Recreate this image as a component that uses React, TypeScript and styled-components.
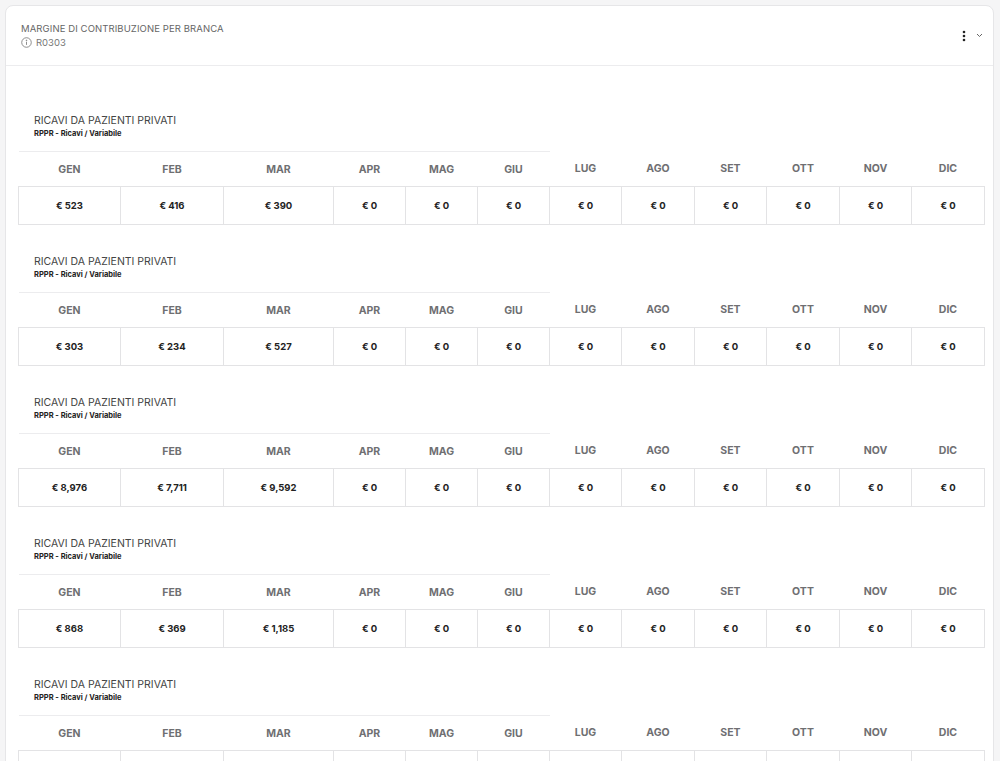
import styled, { createGlobalStyle } from "styled-components";

const Global = createGlobalStyle`
  body {
    margin: 0;
    background: #f5f5f6;
    font-family: Inter, "Liberation Sans", sans-serif;
  }
`;

const Page = styled.div`
  padding: 5px 6px 0 5px;
  height: 761px;
  box-sizing: border-box;
  overflow: hidden;
`;

const Card = styled.div`
  background: #fff;
  border: 1px solid #e6e6e8;
  border-radius: 8px;
  min-height: 800px;
`;

const CardHeader = styled.div`
  display: flex;
  justify-content: space-between;
  align-items: center;
  height: 59px;
  padding: 0 10px 0 15px;
  border-bottom: 1px solid #ececee;
`;

const Title = styled.div`
  font-size: 9.5px;
  color: #666;
  letter-spacing: 0.1px;
`;

const Code = styled.div`
  display: flex;
  align-items: center;
  gap: 4px;
  margin-top: 3px;
  font-size: 9.5px;
  color: #777;
`;

const Actions = styled.div`
  display: flex;
  align-items: center;
  gap: 10px;
  color: #333;
`;

const Body = styled.div`
  padding: 48px 10px 0 12px;
  display: flex;
  flex-direction: column;
  gap: 30px;
`;

const Section = styled.div``;

const SectionTitle = styled.div`
  padding-left: 16px;
  font-size: 10.5px;
  color: #444;
`;

const SectionSub = styled.div`
  padding-left: 16px;
  margin-top: 2px;
  font-size: 7.5px;
  font-weight: 700;
  color: #222;
  margin-bottom: 13px;
`;

const Table = styled.table`
  width: 966px;
  border-collapse: collapse;
  table-layout: fixed;
`;

const Th = styled.th<{ $top: boolean }>`
  height: 34px;
  padding: 0;
  font-size: 10.5px;
  font-weight: 700;
  color: #6f6f72;
  border-top: ${(p) => (p.$top ? "1px solid #ececee" : "none")};
`;

const Td = styled.td`
  height: 37px;
  padding: 0;
  text-align: center;
  font-size: 9.5px;
  font-weight: 700;
  color: #222;
  border: 1px solid #e3e3e5;
`;

const months = ["GEN", "FEB", "MAR", "APR", "MAG", "GIU", "LUG", "AGO", "SET", "OTT", "NOV", "DIC"];
const widths = [102, 103, 110, 72, 72, 72, 72, 73, 72, 73, 72, 73];
const rows = [
  ["523", "416", "390"],
  ["303", "234", "527"],
  ["8,976", "7,711", "9,592"],
  ["868", "369", "1,185"],
  ["", "", ""],
];

export default function App() {
  return (
    <Page>
      <Global />
      <Card>
        <CardHeader>
          <div>
            <Title>MARGINE DI CONTRIBUZIONE PER BRANCA</Title>
            <Code>
              <svg width="11" height="11" viewBox="0 0 12 12" fill="none" stroke="#777" strokeWidth="0.9">
                <circle cx="6" cy="6" r="5.2" />
                <line x1="6" y1="5.2" x2="6" y2="8.6" />
                <circle cx="6" cy="3.6" r="0.4" fill="#777" />
              </svg>
              R0303
            </Code>
          </div>
          <Actions>
            <svg width="4" height="12" viewBox="0 0 4 12" fill="#222">
              <circle cx="2" cy="2" r="1.3" />
              <circle cx="2" cy="6" r="1.3" />
              <circle cx="2" cy="10" r="1.3" />
            </svg>
            <svg width="7" height="5" viewBox="0 0 7 5" fill="none" stroke="#666" strokeWidth="1">
              <polyline points="1,1 3.5,3.5 6,1" />
            </svg>
          </Actions>
        </CardHeader>
        <Body>
          {rows.map((r, i) => (
            <Section key={i}>
              <SectionTitle>RICAVI DA PAZIENTI PRIVATI</SectionTitle>
              <SectionSub>RPPR - Ricavi / Variabile</SectionSub>
              <Table>
                <colgroup>
                  {widths.map((w, j) => (
                    <col key={j} style={{ width: w }} />
                  ))}
                </colgroup>
                <thead>
                  <tr>
                    {months.map((m, j) => (
                      <Th key={m} $top={j < 6}>{m}</Th>
                    ))}
                  </tr>
                </thead>
                <tbody>
                  <tr>
                    {months.map((m, j) => (
                      <Td key={m}>{r[j] !== undefined ? (r[j] ? `€ ${r[j]}` : "") : "€ 0"}</Td>
                    ))}
                  </tr>
                </tbody>
              </Table>
            </Section>
          ))}
        </Body>
      </Card>
    </Page>
  );
}
